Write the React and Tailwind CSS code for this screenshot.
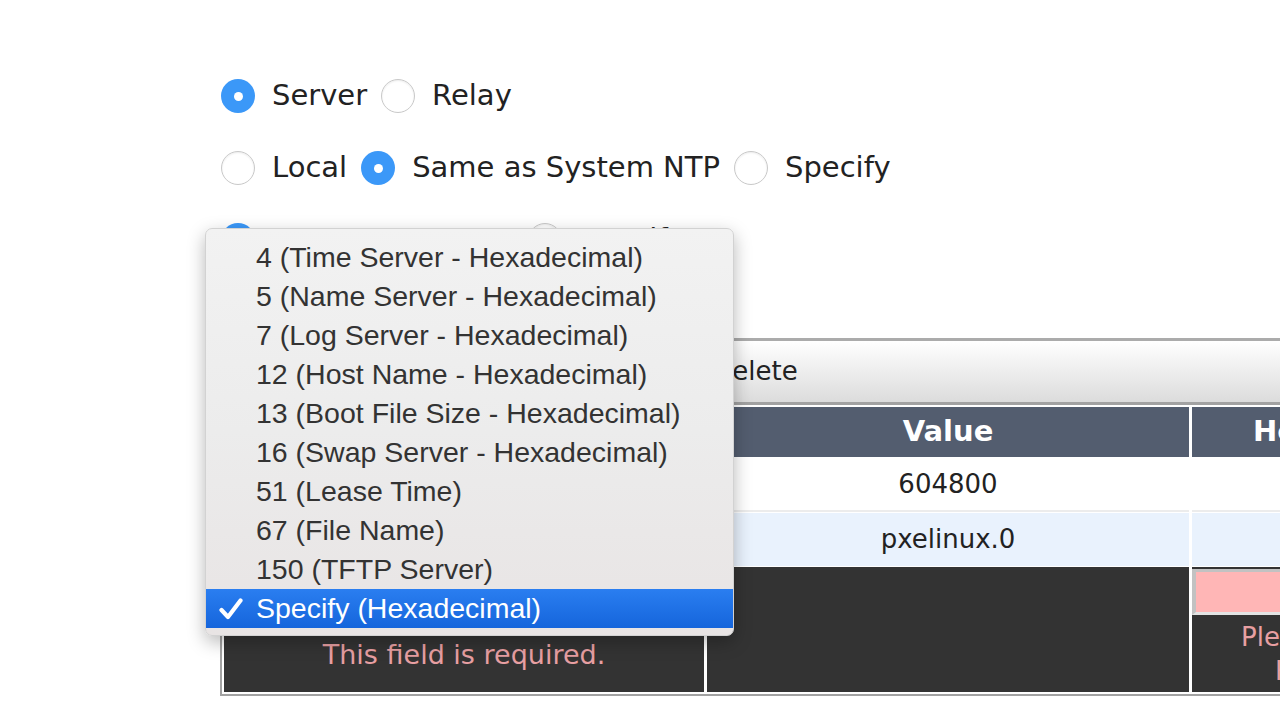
import React, { useState } from "react";

const menuItems = [
  "4 (Time Server - Hexadecimal)",
  "5 (Name Server - Hexadecimal)",
  "7 (Log Server - Hexadecimal)",
  "12 (Host Name - Hexadecimal)",
  "13 (Boot File Size - Hexadecimal)",
  "16 (Swap Server - Hexadecimal)",
  "51 (Lease Time)",
  "67 (File Name)",
  "150 (TFTP Server)",
  "Specify (Hexadecimal)",
];

const Radio = ({ checked }) =>
  checked ? (
    <span className="w-[34px] h-[34px] rounded-full bg-[#3b98f8] flex items-center justify-center shrink-0">
      <span className="w-[9px] h-[9px] rounded-full bg-white" />
    </span>
  ) : (
    <span className="w-[34px] h-[34px] rounded-full border border-[#c9c9c9] bg-white shadow-[inset_0_1px_2px_rgba(0,0,0,0.08)] shrink-0" />
  );

const RadioRow = ({ options, value }) => (
  <div className="flex items-center h-[36px]">
    {options.map(opt => (
      <label key={opt} className="flex items-center">
        <Radio checked={opt === value} />
        <span className="ml-[17px] mr-[14px] text-[29px] text-[#222]">{opt}</span>
      </label>
    ))}
  </div>
);

const App = () => {
  const [selected] = useState("Specify (Hexadecimal)");

  return (
    <div className="relative w-[1280px] h-[720px] overflow-hidden bg-white font-['DejaVu_Sans',sans-serif]">
      <div className="pl-[221px] pt-[78px] flex flex-col gap-[36px]">
        <RadioRow options={["Server", "Relay"]} value="Server" />
        <RadioRow options={["Local", "Same as System NTP", "Specify"]} value="Same as System NTP" />
        <RadioRow options={["Same as System", "Specify"]} value="Same as System" />
      </div>

      <div className="ml-[220px] mt-[80px] w-[1460px]">
        <div className="h-[64px] border-t-[3px] border-[#ababab] bg-gradient-to-b from-white to-[#dcdcdc] flex items-center pl-[422px] text-[26px] text-[#222]">
          <span className="mr-[20px]">Add</span>
          <span>Delete</span>
        </div>
        <div className="border-2 border-t-[3px] border-[#a2a2a2] p-[2px] bg-white grid grid-cols-[480px_482px_1fr] gap-x-[3px] gap-y-[1px] text-[26px]">
          <div className="h-[50px] bg-[#535d6f] flex items-center justify-center text-white font-bold text-[29px]">Option</div>
          <div className="h-[50px] bg-[#535d6f] flex items-center justify-center text-white font-bold text-[29px]">Value</div>
          <div className="h-[50px] bg-[#535d6f] flex items-center pl-[61px] text-white font-bold text-[29px]">Hex</div>

          <div className="h-[54px] bg-white border-b-2 border-[#ececec] flex items-center justify-center text-[#222]">51 (Lease Time)</div>
          <div className="h-[54px] bg-white border-b-2 border-[#ececec] flex items-center justify-center text-[#222]">604800</div>
          <div className="h-[54px] bg-white border-b-2 border-[#ececec]" />

          <div className="h-[53px] bg-[#e9f2fd] flex items-center justify-center text-[#222]">67 (File Name)</div>
          <div className="h-[53px] bg-[#e9f2fd] flex items-center justify-center text-[#222]">pxelinux.0</div>
          <div className="h-[53px] bg-[#e9f2fd]" />

          <div className="h-[125px] bg-[#333333] pt-[73px] text-center leading-[30px] text-[27px] text-[#e79fa2]">
            This field is required.
          </div>
          <div className="h-[125px] bg-[#333333]" />
          <div className="h-[125px] bg-[#333333] pt-[2px] pr-[3px]">
            <div className="h-[46px] bg-[#ffb6b6] border-t-[3px] border-l-[4px] border-b-[3px] border-[#c2c2c2] border-b-[#e4e4e4]" />
            <div className="leading-[34px] text-[#e79fa2] mt-[5px]">
              <div className="pl-[49px]">Please enter a value.</div>
              <div className="pl-[83px]">Hexadecimal only.</div>
            </div>
          </div>
        </div>
      </div>

      {/* popup menu of the option select */}
      <div className="absolute left-[205px] top-[228px] w-[529px] h-[408px] rounded-[7px] bg-gradient-to-b from-[#f2f2f2] via-[#ececec] to-[#e8e4e4] border border-[#d2d2d2] shadow-[0_6px_18px_rgba(0,0,0,0.28)] pt-[9px] font-['Liberation_Sans',sans-serif]">
        {menuItems.map(item => {
          const active = item === selected;
          return (
            <div
              key={item}
              className={
                active
                  ? "relative h-[39px] flex items-center pl-[50px] text-[28.5px] text-white bg-gradient-to-b from-[#2a7ef0] to-[#1565dc]"
                  : "relative h-[39px] flex items-center pl-[50px] text-[28.5px] text-[#333]"
              }
            >
              {active && (
                <svg className="absolute left-[13px] top-[9px]" width="24" height="22" viewBox="0 0 24 22">
                  <path d="M2.5 12 L9 19 L21.5 2.5" fill="none" stroke="white" strokeWidth="4.2" strokeLinecap="round" strokeLinejoin="round" />
                </svg>
              )}
              {item}
            </div>
          );
        })}
      </div>
    </div>
  );
};

export default App;
